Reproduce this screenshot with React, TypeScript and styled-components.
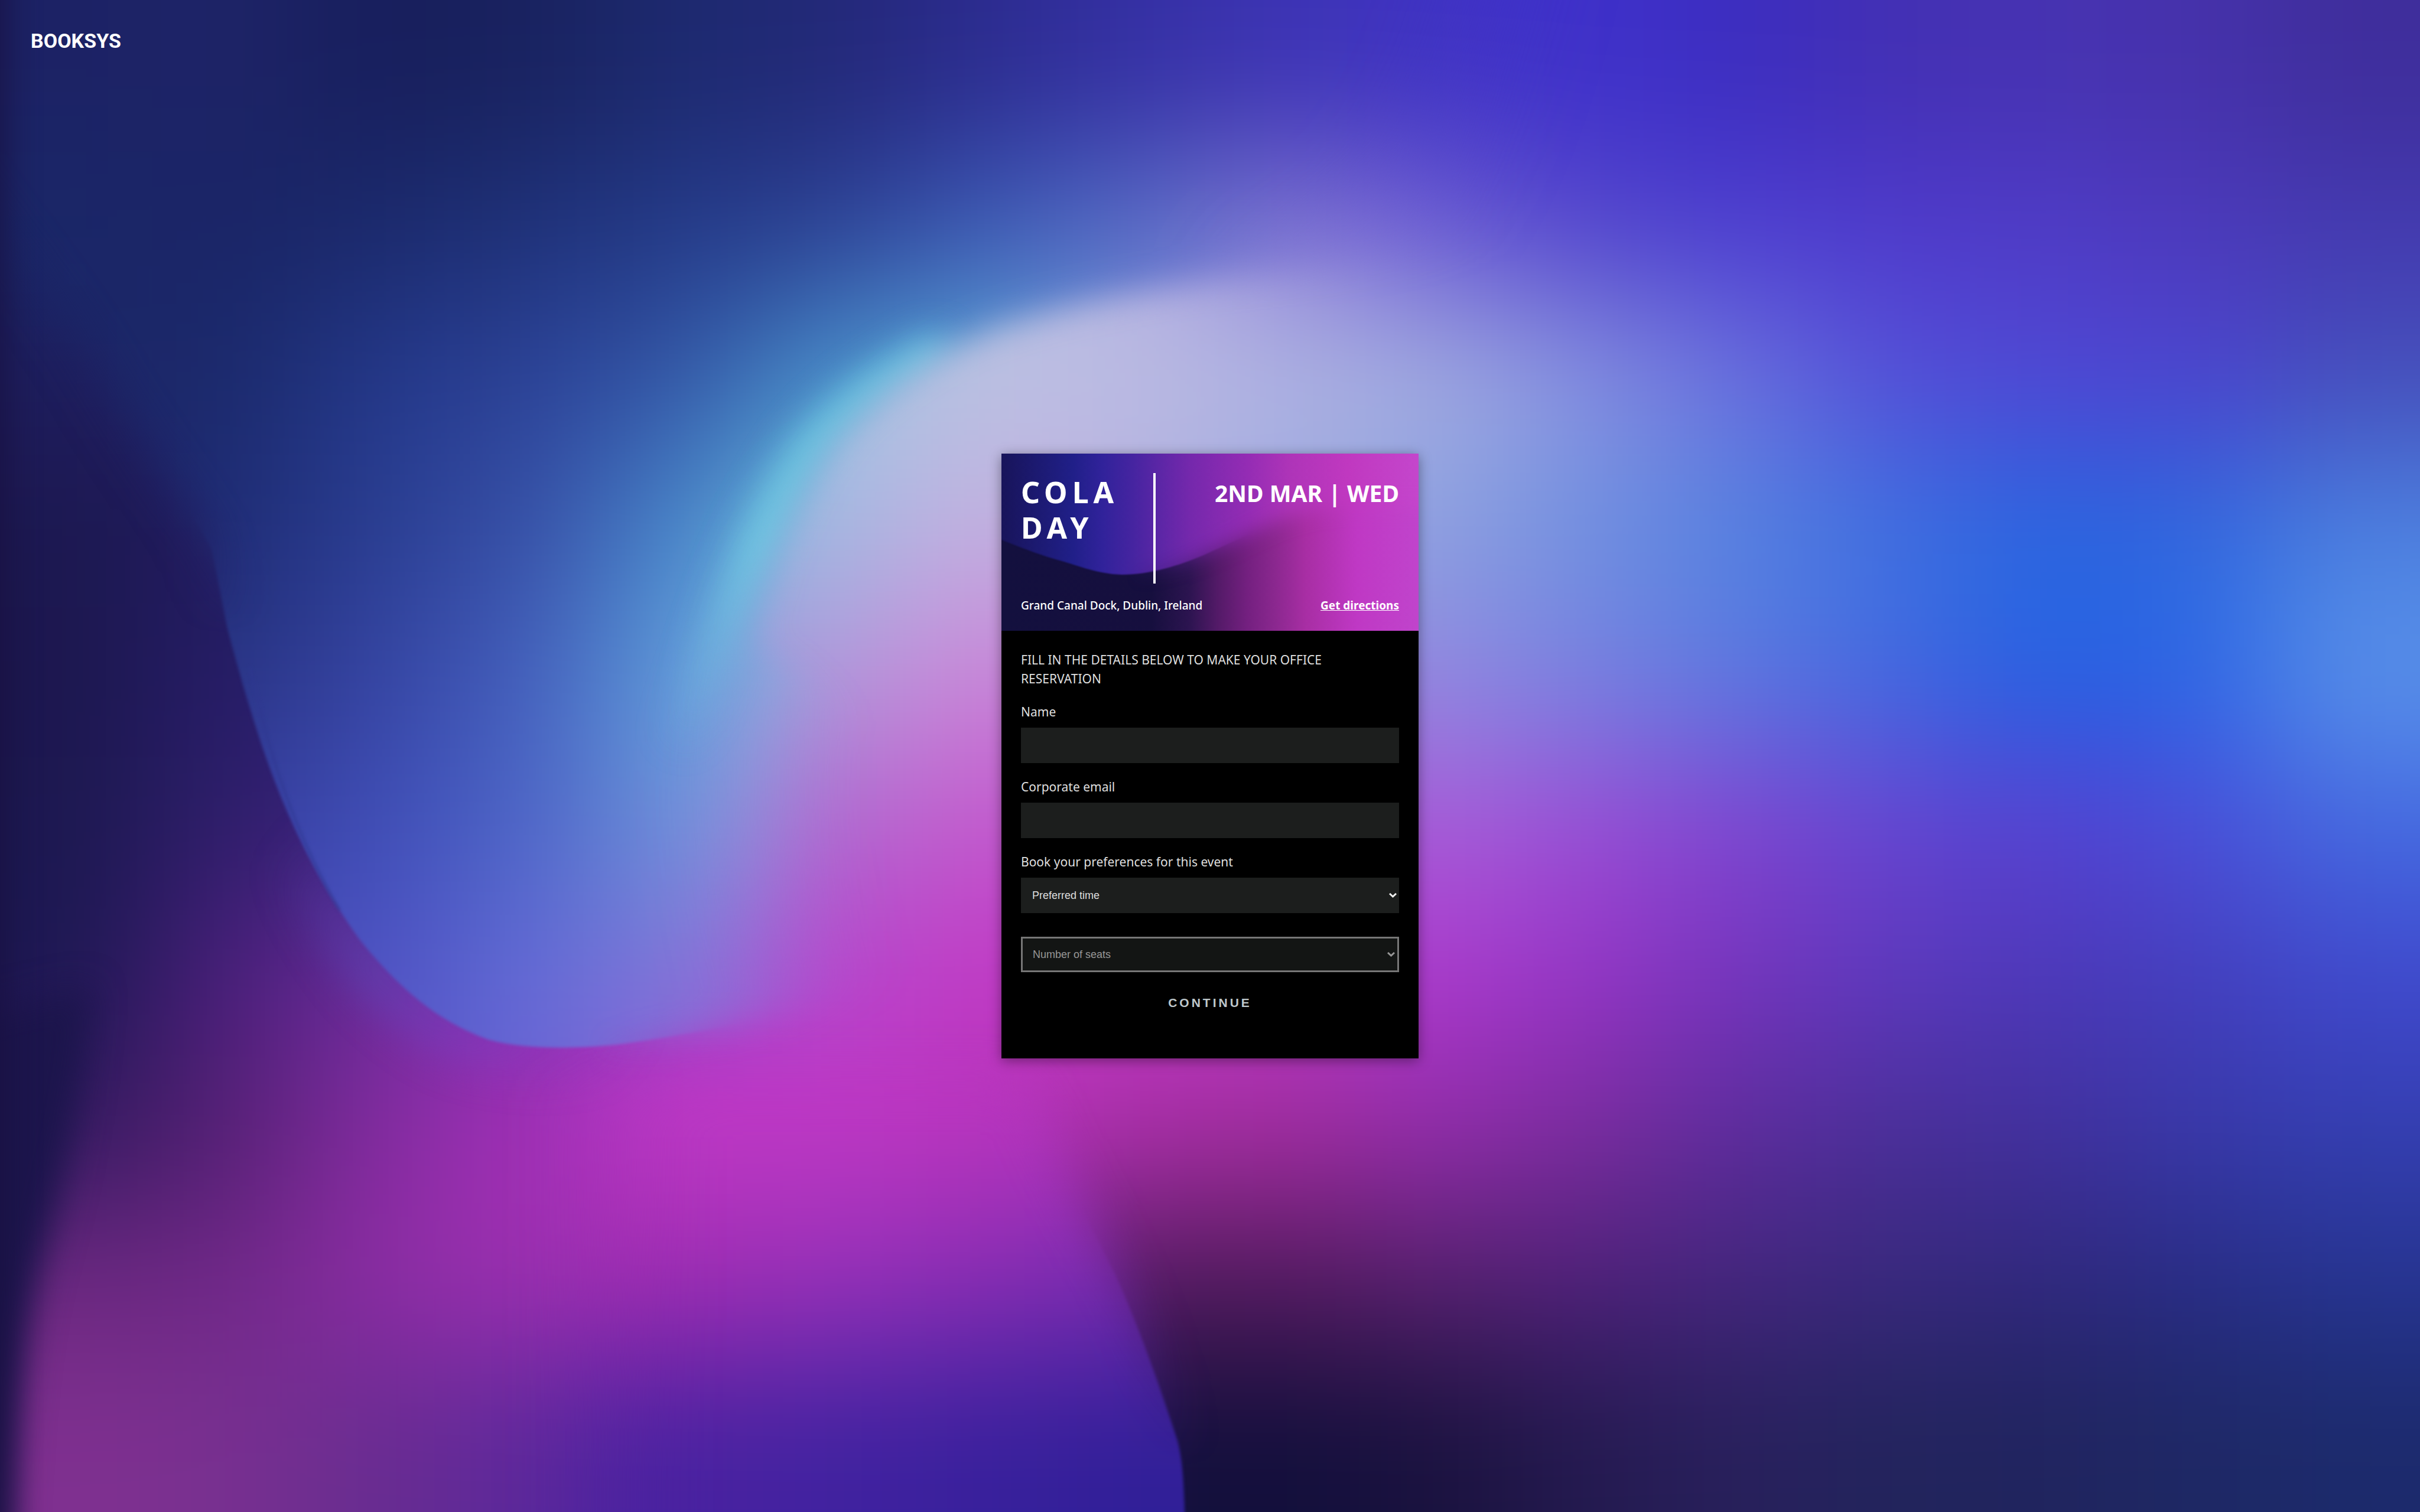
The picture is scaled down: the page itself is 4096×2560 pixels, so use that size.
import React from "react";
import styled, { createGlobalStyle } from "styled-components";

const GlobalStyle = createGlobalStyle`
  *, *::before, *::after { box-sizing: border-box; }
  body {
    margin: 0;
    background: #1c1850;
    font-family: "Noto Sans", "Open Sans", sans-serif;
    color: #dfdfdf;
  }
`;

const Page = styled.div`
  display: grid;
  min-height: 100vh;
  position: relative;
`;

const Backdrop = styled.svg`
  position: absolute;
  inset: 0;
  width: 100%;
  height: 100%;
`;

const TopBar = styled.header`
  grid-area: 1 / 1;
  align-self: start;
  justify-self: start;
  padding: 43px 52px;
  z-index: 1;
`;

const Logo = styled.a`
  display: block;
  font-family: Roboto, "Liberation Sans", sans-serif;
  font-size: 34px;
  line-height: 52px;
  font-weight: 700;
  color: #fff;
  text-decoration: none;
`;

const Main = styled.main`
  grid-area: 1 / 1;
  display: flex;
  align-items: center;
  justify-content: center;
  z-index: 1;
`;

const Card = styled.section`
  width: 706px;
  max-width: 100%;
  background: #000;
  box-shadow: 0 4px 20px rgba(0, 0, 0, 0.4);
`;

const Hero = styled.div`
  display: grid;
  position: relative;
  color: #fff;
`;

const HeroContent = styled.div`
  display: flex;
  flex-direction: column;
  gap: 25px;
  padding: 33px 33px 31px;
  position: relative;
`;

const HeroTop = styled.div`
  display: flex;
  align-items: stretch;
  justify-content: space-between;
`;

const TitleBox = styled.div`
  width: 228px;
  height: 187px;
  padding-top: 2px;
  border-right: 4px solid #fff;
`;

const Title = styled.h1`
  margin: 0;
  font-size: 50px;
  line-height: 60px;
  font-weight: 700;
  letter-spacing: 8px;
`;

const DateText = styled.p`
  margin: 0;
  padding-top: 9px;
  font-size: 39px;
  line-height: 50px;
  font-weight: 700;
`;

const HeroBottom = styled.div`
  display: flex;
  justify-content: space-between;
  font-size: 19px;
  line-height: 24px;
  font-weight: 500;
`;

const Directions = styled.a`
  color: #fff;
  font-weight: 700;
  text-decoration: underline;
`;

const Form = styled.form`
  display: flex;
  flex-direction: column;
  padding: 33px 33px 70px;
  font-size: 21px;
  line-height: 32px;
`;

const Intro = styled.p`
  margin: 0;
`;

const Field = styled.div`
  display: flex;
  flex-direction: column;
  gap: 11px;
  margin-top: 24px;
`;

const TextInput = styled.input`
  width: 100%;
  height: 60px;
  padding: 0 19px;
  border: 0;
  background: #1c1e1d;
  color: #dfdfdf;
  font: 18px "Liberation Sans", Arial, sans-serif;
`;

const SelectWrap = styled.div<{ $spaced?: boolean }>`
  display: grid;
  position: relative;
  margin-top: ${(p) => (p.$spaced ? "40px" : "0")};
`;

const Select = styled.select`
  appearance: none;
  width: 100%;
  height: 60px;
  padding: 0 19px;
  border: 0;
  border-radius: 0;
  background: #1c1e1d;
  color: #dfdfdf;
  font: 18px "Liberation Sans", Arial, sans-serif;
  &:disabled {
    border: 3px solid #767676;
    padding: 0 17px;
    background: #131514;
    color: #979797;
    opacity: 1;
  }
`;

const Chevron = styled.svg<{ $muted?: boolean }>`
  position: absolute;
  right: ${(p) => (p.$muted ? "7px" : "4px")};
  top: 26px;
  width: 13px;
  height: 8px;
  fill: none;
  stroke: ${(p) => (p.$muted ? "#979797" : "#f0f0f0")};
  stroke-width: 3;
  pointer-events: none;
`;

const Continue = styled.button`
  height: 48px;
  margin-top: 28px;
  border: 0;
  background: transparent;
  color: #bfc8cc;
  font: 700 21px "Liberation Sans", Arial, sans-serif;
  letter-spacing: 4px;
`;

const CELL = 98;

/* Main colour field, one colour per 98-unit cell, 16 by 10. */
const FIELD: string[] = [
  "1c2265 1e2468 171e5c 19225f 1d2a70 232878 2c2c90 3530a4 3d34b4 4033c4 3f31cb 3c2dc0 4330b4 4733b2 4632ac 3f2e9c",
  "1a2768 1a2466 1b2a6c 1f327a 243a88 9ab4de b4bce0 b4b0e2 9084d8 6c5cd4 5446cc 4d3ed0 4f3acc 4f3bc6 4d3abc 443ab0",
  "1e1d5c 221f66 24388a 2c4298 80b8dc a4c4e2 bcc2e2 bcbce2 b0b4e2 a2ace0 8690e0 6a70de 5450d8 5048d4 4c44d0 4650bc",
  "1c1850 221c60 221c60 3c54ac 80bce0 a4b8e2 c6b0e0 b4b0e2 9ca8e0 8ca0e0 7090e0 5482e0 3e70e0 2866e0 3068de 4c80e0",
  "1c174e 261d68 2c2070 9080d0 9098dc b298da cc84d8 c080d8 a080dc 9088e0 7880e0 5c78e0 4468e0 2660e2 2c66e6 5890ea",
  "1c1850 301e6c 3c2480 9060c8 9880d8 b068d0 c458cc b850d0 a850d4 a85cd8 9a4cd4 8044d0 6844d0 5840d0 4c4cd8 4468e0",
  "1c1852 4c1f7c 6c2c9c 8830b0 a848d0 b844cc c038c4 c038c4 b83ac4 aa38cc 9434c4 7434bc 5c38bc 4c38b8 443ebc 4048cc",
  "341a60 562074 842ca0 a430b8 b434c0 be38c4 b834bc a82ea4 a02c9c 902ca8 7a2c9c 5c2c9c 4a2f98 42309c 3838a8 343eb0",
  "6c2880 702888 8c2ca4 9c30b0 9c2cb0 9430b8 7a2cb0 501a5c 50195c 54206c 4c2078 42267c 38287c 30287c 282c84 263490",
  "803090 783090 682c90 5c289c 4a22a0 4022a0 34209a 14103c 120f3c 1a123e 241a50 28205c 22245c 20245e 1e2864 1c2a6c",
];

/* The blue wave in front of it, ending in a drop at lower left. */
const WAVE: string[] = [
  "1c2265 1e2468 171e5c 19225f 1d2a70 232878 2c2c90 3530a4 3d34b4 4033c4 3f31cb",
  "1a2768 1a2466 1b2a6c 1f327a 243a88 2d4296 3c5ab4 566cc6 8074d2 6c5cd4 5446cc",
  "1c2566 1b2a6c 24388a 2c4298 3458a8 4890cc 5ca8d8 8498dc 9090dc 8c88dc 8690e0",
  "1c2462 1f2c76 2a3e92 3850a8 4888cc 70c4de 8cc0de 9cb0e0 9ca8e0 8ca0e0 7090e0",
  "24307c 2a3484 3644a4 4460be 60a0dc 90b8e0 ac98d8 c080d8 a080dc 9088e0 7880e0",
  "343c9c 383ea0 404eb8 4e66c8 7094dc 9c90d8 b068d0 b850d0 a850d4 a85cd8 9a4cd4",
  "444ab8 444ab8 5052c4 646cd8 8474d8 a858d2 b838c8 c038c4 b83ac4 aa38cc 9434c4",
  "5858c8 5858c8 5858c8 6a62d4 8c60d4 b044cc b838c8 a82ea4 a02c9c 902ca8 7a2c9c",
];

/* Indigo fold along the bottom edge. */
const FOLD: string[] = [
  "4c1f7c 6c2c9c 8830b0 a434bc b838c8 bc38c8 c038c4 c038c4 c038c4",
  "562074 842ca0 a430b8 b434c0 be38c4 be38c4 b834bc ac34bc a834bc",
  "702888 8c2ca4 9c30b0 9c2cb0 9c2cb0 9430b8 842cb2 742aae 6c2aae",
  "783090 682c90 5c289c 4a22a0 4a22a0 4022a0 38209c 301f98 2e1f98",
];

interface MeshProps {
  rows: string[];
  top?: number;
  left?: number;
  blur: string;
}

function Mesh({ rows, top = 0, left = 0, blur }: MeshProps) {
  const pad = 160;
  return (
    <g filter={`url(#${blur})`}>
      {rows.map((row, j) => {
        const cells = row.split(" ");
        const y0 = j === 0 ? top - pad : top + j * CELL;
        const y1 = j === rows.length - 1 ? top + (j + 1) * CELL + pad : top + (j + 1) * CELL;
        return cells.map((c, i) => {
          const x0 = i === 0 ? left - pad : left + i * CELL;
          const x1 = i === cells.length - 1 ? left + (i + 1) * CELL + pad : left + (i + 1) * CELL;
          return (
            <rect key={`${j}-${i}`} x={x0} y={y0} width={x1 - x0 + 1} height={y1 - y0 + 1} fill={`#${c}`} />
          );
        });
      })}
    </g>
  );
}

interface BlurProps {
  id: string;
  by: number;
}

function Blur({ id, by }: BlurProps) {
  return (
    <filter
      id={id}
      filterUnits="userSpaceOnUse"
      x="-200"
      y="-200"
      width="1968"
      height="1380"
      colorInterpolationFilters="sRGB"
    >
      <feGaussianBlur stdDeviation={by} />
    </filter>
  );
}

const DROP =
  "M-200 -200 H1200 V400 L640 610 C600 634 560 646 520 655 C470 666 430 673 400 677 C372 680 340 680 317 674 C283 662 258 640 233 609 C205 570 186 530 172 490 C160 455 152 425 147 406 C143 385 140 370 137 356 C122 326 96 296 66 244 C36 190 -10 140 -60 60 L-200 0 Z";
const FOLD_SHAPE =
  "M-200 500 H640 C650 640 660 690 673 724 C682 748 700 780 723 827 C738 860 752 900 763 934 C768 955 769 970 768 1180 H-200 Z";

function Background() {
  return (
    <Backdrop viewBox="0 0 1568 980" preserveAspectRatio="xMidYMid slice" aria-hidden="true">
      <defs>
        <Blur id="b-mesh" by={44} />
        <Blur id="b-40" by={34} />
        <Blur id="b-18" by={16} />
        <Blur id="b-10" by={11} />
        <Blur id="b-6" by={6} />
        <Blur id="b-1" by={1} />
        <linearGradient id="sharpen" gradientUnits="userSpaceOnUse" x1="0" y1="780" x2="0" y2="950">
          <stop offset="0" stopColor="#000" />
          <stop offset="1" stopColor="#fff" />
        </linearGradient>
        <linearGradient id="dropSharpen" gradientUnits="userSpaceOnUse" x1="0" y1="330" x2="0" y2="410">
          <stop offset="0" stopColor="#000" />
          <stop offset="1" stopColor="#fff" />
        </linearGradient>
        <linearGradient id="dropSoftTail" gradientUnits="userSpaceOnUse" x1="380" y1="0" x2="480" y2="0">
          <stop offset="0" stopColor="#000" />
          <stop offset="1" stopColor="#fff" />
        </linearGradient>
        <linearGradient id="crest" gradientUnits="userSpaceOnUse" x1="540" y1="250" x2="440" y2="490">
          <stop offset="0" stopColor="#70d0e4" stopOpacity="0.75" />
          <stop offset="0.45" stopColor="#70d0e4" stopOpacity="0.85" />
          <stop offset="1" stopColor="#70c0e4" stopOpacity="0" />
        </linearGradient>
        <linearGradient id="halo" gradientUnits="userSpaceOnUse" x1="190" y1="540" x2="400" y2="700">
          <stop offset="0" stopColor="#5044b0" stopOpacity="0" />
          <stop offset="0.35" stopColor="#5a44b4" stopOpacity="0.55" />
          <stop offset="0.65" stopColor="#7c3cc0" stopOpacity="0.5" />
          <stop offset="1" stopColor="#9038c4" stopOpacity="0" />
        </linearGradient>
        <mask id="m-sharpen" maskUnits="userSpaceOnUse" x="-200" y="-200" width="1968" height="1380">
          <rect x="-200" y="-200" width="1968" height="1380" fill="url(#sharpen)" />
        </mask>
        <mask id="m-dropSharpen" maskUnits="userSpaceOnUse" x="-200" y="-200" width="1968" height="1380">
          <rect x="-200" y="-200" width="1968" height="1380" fill="url(#dropSharpen)" />
        </mask>
        <mask id="m-dropTail" maskUnits="userSpaceOnUse" x="-200" y="-200" width="1968" height="1380">
          <rect x="-200" y="-200" width="1968" height="1380" fill="url(#dropSoftTail)" />
        </mask>
        <mask id="m-wave" maskUnits="userSpaceOnUse" x="-200" y="-200" width="1968" height="1380">
          <path d={DROP} fill="#fff" filter="url(#b-18)" />
          <g mask="url(#m-dropSharpen)">
            <rect x="-200" y="-200" width="1968" height="1380" fill="#000" />
            <path d={DROP} fill="#fff" filter="url(#b-1)" />
          </g>
          <g mask="url(#m-dropTail)">
            <rect x="-200" y="-200" width="1968" height="1380" fill="#000" />
            <path d={DROP} fill="#fff" filter="url(#b-10)" />
          </g>
          <path
            d="M1300 800 H580 C520 700 500 600 490 520 C494 440 510 380 540 340 L700 290 L1300 250 Z"
            fill="#000"
            filter="url(#b-40)"
          />
          <path
            d="M490 420 C498 380 516 322 542 285 C570 252 602 230 645 213 C690 198 740 188 800 180 L1300 150 V560 H700 C640 510 560 450 490 420 Z"
            fill="#000"
            filter="url(#b-10)"
          />
          <path d="M820 190 C900 150 960 120 1000 -200 H1400 V500 H800 Z" fill="#000" filter="url(#b-40)" />
        </mask>
        <mask id="m-fold" maskUnits="userSpaceOnUse" x="-200" y="-200" width="1968" height="1380">
          <path d={FOLD_SHAPE} fill="#fff" filter="url(#b-18)" />
          <g mask="url(#m-sharpen)">
            <rect x="-200" y="-200" width="1968" height="1380" fill="#000" />
            <path d={FOLD_SHAPE} fill="#fff" filter="url(#b-1)" />
          </g>
          <rect x="-200" y="300" width="1968" height="400" fill="#000" filter="url(#b-18)" />
          <rect x="-200" y="300" width="600" height="900" fill="#000" filter="url(#b-40)" />
        </mask>
      </defs>
      <Mesh rows={FIELD} blur="b-mesh" />
      <path
        d="M176 520 C200 580 240 640 290 668 C320 682 350 686 420 680"
        fill="none"
        stroke="url(#halo)"
        strokeWidth="36"
        filter="url(#b-10)"
      />
      <g mask="url(#m-fold)">
        <Mesh rows={FOLD} top={588} blur="b-mesh" />
      </g>
      <g mask="url(#m-wave)">
        <Mesh rows={WAVE} blur="b-mesh" />
        <path
          d="M430 500 C462 440 484 350 526 290 C550 262 574 244 612 226"
          fill="none"
          stroke="url(#crest)"
          strokeWidth="24"
          filter="url(#b-10)"
        />
      </g>
      <path d="M162 432 C170 470 185 530 220 590" fill="none" stroke="#2f3790" strokeWidth="2" opacity="0.5" filter="url(#b-1)" />
      <path
        d="M-200 700 L58 640 C50 740 34 790 24 830 C14 880 6 930 2 1180 H-200 Z"
        fill="#1c154c"
        filter="url(#b-10)"
      />
      <rect x="-200" y="-200" width="204" height="1380" fill="#181040" opacity="0.8" filter="url(#b-10)" />
    </Backdrop>
  );
}

const HERO_SHAPE =
  "M-100 -100 H900 V90 H600 C540 92 500 102 465 116 C420 136 390 150 342 172 C300 190 250 205 204 205 C160 204 120 186 95 180 C60 170 36 160 0 146 L-100 106 Z";

function HeroArt() {
  return (
    <Backdrop viewBox="0 0 706 300" preserveAspectRatio="none" aria-hidden="true">
      <defs>
        <linearGradient id="h-top">
          <stop offset="0" stopColor="#18145a" />
          <stop offset="0.17" stopColor="#201f88" />
          <stop offset="0.24" stopColor="#30229a" />
          <stop offset="0.31" stopColor="#4424a0" />
          <stop offset="0.45" stopColor="#7428ac" />
          <stop offset="0.59" stopColor="#942cb4" />
          <stop offset="0.69" stopColor="#ae34b8" />
          <stop offset="0.83" stopColor="#c038c0" />
          <stop offset="1" stopColor="#c446cc" />
        </linearGradient>
        <linearGradient id="h-base">
          <stop offset="0" stopColor="#13103e" />
          <stop offset="0.36" stopColor="#160f3e" />
          <stop offset="0.45" stopColor="#2c1450" />
          <stop offset="0.52" stopColor="#541a68" />
          <stop offset="0.59" stopColor="#742080" />
          <stop offset="0.66" stopColor="#8c2890" />
          <stop offset="0.73" stopColor="#a82ea4" />
          <stop offset="0.85" stopColor="#bf38c4" />
          <stop offset="1" stopColor="#c044cc" />
        </linearGradient>
        <linearGradient id="h-fade">
          <stop offset="0.3" stopColor="#000" />
          <stop offset="0.6" stopColor="#fff" />
        </linearGradient>
        <mask id="h-m-fade" maskUnits="userSpaceOnUse" x="-100" y="-100" width="906" height="500">
          <rect width="706" height="300" fill="url(#h-fade)" />
        </mask>
        <mask id="h-mask" maskUnits="userSpaceOnUse" x="-100" y="-100" width="906" height="500">
          <path d={HERO_SHAPE} fill="#fff" filter="url(#b-1)" />
          <g mask="url(#h-m-fade)">
            <rect x="-100" y="-100" width="906" height="500" fill="#000" />
            <path d={HERO_SHAPE} fill="#fff" filter="url(#b-18)" />
          </g>
        </mask>
      </defs>
      <rect width="706" height="300" fill="url(#h-base)" />
      <rect width="706" height="300" fill="url(#h-top)" mask="url(#h-mask)" />
    </Backdrop>
  );
}

export default function App() {
  return (
    <>
      <GlobalStyle />
      <Page>
        <Background />
        <TopBar>
          <Logo href="#">BOOKSYS</Logo>
        </TopBar>
        <Main>
          <Card>
            <Hero>
              <HeroArt />
              <HeroContent>
                <HeroTop>
                  <TitleBox>
                    <Title>
                      COLA
                      <br />
                      DAY
                    </Title>
                  </TitleBox>
                  <DateText>2ND MAR | WED</DateText>
                </HeroTop>
                <HeroBottom>
                  <span>Grand Canal Dock, Dublin, Ireland</span>
                  <Directions href="#">Get directions</Directions>
                </HeroBottom>
              </HeroContent>
            </Hero>
            <Form onSubmit={(e) => e.preventDefault()}>
              <Intro>FILL IN THE DETAILS BELOW TO MAKE YOUR OFFICE RESERVATION</Intro>
              <Field>
                <label htmlFor="name">Name</label>
                <TextInput id="name" type="text" />
              </Field>
              <Field>
                <label htmlFor="email">Corporate email</label>
                <TextInput id="email" type="email" />
              </Field>
              <Field>
                <label htmlFor="time">Book your preferences for this event</label>
                <SelectWrap>
                  <Select id="time">
                    <option>Preferred time</option>
                  </Select>
                  <Chevron viewBox="0 0 13 8">
                    <path d="M1 1 L6.500 6 L12 1" />
                  </Chevron>
                </SelectWrap>
              </Field>
              <SelectWrap $spaced>
                <Select aria-label="Number of seats" disabled>
                  <option>Number of seats</option>
                </Select>
                <Chevron $muted viewBox="0 0 13 8">
                  <path d="M1 1 L6.500 6 L12 1" />
                </Chevron>
              </SelectWrap>
              <Continue type="submit">CONTINUE</Continue>
            </Form>
          </Card>
        </Main>
      </Page>
    </>
  );
}
